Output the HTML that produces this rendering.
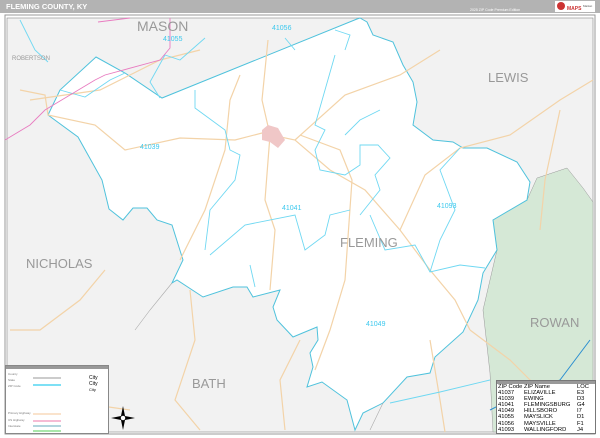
<!DOCTYPE html>
<html><head><style>
body{margin:0;width:600px;height:436px;background:#fff;overflow:hidden;font-family:"Liberation Sans",Arial,sans-serif;position:relative}
.hdr{position:absolute;left:0;top:0;width:600px;height:13px;background:#b3b3b3}
.hdr .t{position:absolute;left:6px;top:2px;color:#fff;font-weight:bold;font-size:7.5px}
.hdr .e{position:absolute;left:470px;top:8px;color:#fff;font-size:3.5px}
.logo{position:absolute;left:555px;top:1px;width:40px;height:11px;background:#fff}
svg{position:absolute;left:0;top:0}
.tbl{position:absolute;left:496px;top:380px;width:98px;height:52px;background:#fff;border:1px solid #777;font-size:5.8px;line-height:6px;color:#000;overflow:hidden}
.tbl .h{background:#999;height:3px}
.tbl div.r{position:relative;height:6.1px}
.tbl span{position:absolute}
.leg{position:absolute;left:5px;top:365px;width:102px;height:67px;background:#fff;border:1px solid #888}
.leg .h{background:#999;height:3px}
</style></head><body>
<div class="hdr"><div class="t">FLEMING COUNTY, KY</div><div class="e">2025 ZIP Code Premium Edition</div>
<div class="logo"><svg width="40" height="11"><circle cx="6" cy="5" r="4" fill="#c33"/><text x="12" y="9" font-size="5" fill="#c33" font-weight="bold">MAPS</text><text x="28" y="6" font-size="3" fill="#555">Market</text></svg></div></div>
<svg width="600" height="436">
<rect x="5" y="15" width="590" height="419" fill="#fff" stroke="#999" stroke-width="1"/>
<rect x="7" y="18" width="586" height="414" fill="#f2f2f2" stroke="#888" stroke-width="0.6"/>
<polygon points="537,178 567,168 583,188 593,202 593,432 493,432 490,373 483,310 497,250 493,220 527,200" fill="#d5e8d6" stroke="#999" stroke-width="0.5"/>
<polygon fill="#fff" stroke="#4fc2dc" stroke-width="1" points="96,57 125,73 162,98 357,19 360,18 367,22 373,35 393,42 403,65 413,82 417,102 413,125 433,140 453,142 463,148 487,148 517,162 530,182 527,200 493,220 497,250 483,273 478,300 463,332 435,357 430,373 407,377 383,403 363,413 355,430 347,400 322,382 307,387 313,367 310,353 318,340 317,327 293,337 277,320 273,307 280,290 253,297 247,287 233,287 203,297 177,280 172,283 183,260 172,225 157,220 147,208 133,208 123,220 109,209 102,180 78,137 48,115 60,90"/>
<g fill="none" stroke="#f3d3a8" stroke-width="1.2">
<path d="M20,90 L45,95 L48,115 L95,125 L125,150 L180,138 L235,140 L262,133 L295,140 L330,170 L365,190 L400,230 L430,270 L455,300 L470,330"/>
<path d="M268,40 L262,100 L270,135 L265,200 L275,230 L270,290"/>
<path d="M300,135 L340,150 L352,180 L345,280 L330,330 L315,370"/>
<path d="M295,140 L345,95 L400,75 L440,50"/>
<path d="M30,100 L100,90 L160,60 L200,50"/>
<path d="M400,230 L425,175 L460,148 L510,135 L560,100 L593,80"/>
<path d="M560,110 L545,180 L540,230"/>
<path d="M105,270 L80,300 L40,330 L10,330"/>
<path d="M190,290 L195,340 L175,400 L200,430"/>
<path d="M10,390 L60,400 L130,410"/>
<path d="M300,340 L280,380 L285,430"/>
<path d="M430,340 L440,400 L445,432"/>
<path d="M470,330 L510,360 L540,390"/>
<path d="M240,75 L230,100 L225,150 L205,210 L180,260"/>
</g>
<g fill="none" stroke="#6fd8f2" stroke-width="0.9">
<path d="M60,90 L85,97 L110,80 L125,73"/>
<path d="M160,98 L150,82 L165,55 L180,60 L205,38"/>
<path d="M195,90 L195,108 L225,130 L230,150 L240,155 L235,180 L210,210 L205,250"/>
<path d="M285,38 L295,50"/>
<path d="M335,30 L350,35 L345,50"/>
<path d="M335,55 L315,125 L325,130 L315,150 L320,170 L345,175 L360,165 L360,145 L378,145 L390,158 L375,175 L380,190 L372,200 L360,215"/>
<path d="M380,110 L360,120 L345,135"/>
<path d="M210,255 L245,225 L295,215 L305,250 L325,235 L330,215 L350,210"/>
<path d="M370,215 L385,250 L415,245 L430,272 L460,265 L485,268"/>
<path d="M430,272 L440,240 L455,210 L440,170 L460,148"/>
<path d="M255,287 L250,265"/>
<path d="M390,403 L440,392 L490,380"/>
<path d="M20,20 L35,50 L48,62"/>
</g>
<path d="M490,410 L520,395 L560,380 L590,340" stroke="#2a8ed0" stroke-width="1" fill="none"/>
<path d="M5,140 L30,125 L45,110 L70,95 L95,80 L105,75 L160,60 L170,48 L170,18" stroke="#e87cc0" stroke-width="0.9" fill="none"/>
<path d="M98,22 L130,18" stroke="#e87cc0" stroke-width="0.9" fill="none"/>
<path d="M172,283 L150,310 L135,330 M383,403 L370,430" stroke="#aaa" stroke-width="0.6" fill="none"/>
<polygon points="262,130 268,125 278,128 285,140 278,148 270,142 262,140" fill="#f0c7c7"/>
<g font-family="Liberation Sans,Arial,sans-serif" fill="#999">
<text x="137" y="31" font-size="14">MASON</text>
<text x="488" y="82" font-size="13">LEWIS</text>
<text x="340" y="247" font-size="13">FLEMING</text>
<text x="26" y="268" font-size="13">NICHOLAS</text>
<text x="530" y="327" font-size="13">ROWAN</text>
<text x="192" y="388" font-size="13">BATH</text>
<text x="12" y="60" font-size="6">ROBERTSON</text>
</g>
<g font-family="Liberation Sans,Arial,sans-serif" fill="#3cc8ee" font-size="7">
<text x="272" y="30">41056</text><text x="163" y="41">41055</text><text x="140" y="149">41039</text>
<text x="282" y="210">41041</text><text x="437" y="208">41093</text><text x="366" y="326">41049</text>
</g>
<g transform="translate(123,418)" fill="#000"><polygon points="0,-12 2,-2 12,0 2,2 0,12 -2,2 -12,0 -2,-2"/><circle r="2.5" fill="#fff" stroke="#000" stroke-width="0.5"/></g>
</svg>
<div class="leg"><div class="h"></div>
<svg width="102" height="64" style="position:relative">
<g font-size="3" fill="#777"><text x="2" y="6">County</text><text x="2" y="12">State</text><text x="2" y="18">ZIP Code</text><text x="2" y="45">Primary Highway</text><text x="2" y="52">US Highway</text><text x="2" y="58">Interstate</text></g>
<g stroke-width="1" fill="none"><path d="M27,9 H55" stroke="#999"/><path d="M27,16 H55" stroke="#7ee0f5" stroke-width="2"/><path d="M27,45 H55" stroke="#f6c79a"/><path d="M27,52 H55" stroke="#e7a"/><path d="M27,57 H55" stroke="#6ab"/><path d="M27,62 H55" stroke="#5c5"/></g>
<text x="83" y="10" font-size="5">City</text><text x="83" y="16" font-size="5">City</text><text x="83" y="22" font-size="4">City</text>
</svg></div>
<div class="tbl"><div class="h"></div>
<div class="r"><span style="left:1px">ZIP Code</span><span style="left:27px">ZIP Name</span><span style="left:80px">LOC</span></div>
<div class="r"><span style="left:1px">41037</span><span style="left:27px">ELIZAVILLE</span><span style="left:80px">E3</span></div>
<div class="r"><span style="left:1px">41039</span><span style="left:27px">EWING</span><span style="left:80px">D3</span></div>
<div class="r"><span style="left:1px">41041</span><span style="left:27px">FLEMINGSBURG</span><span style="left:80px">G4</span></div>
<div class="r"><span style="left:1px">41049</span><span style="left:27px">HILLSBORO</span><span style="left:80px">I7</span></div>
<div class="r"><span style="left:1px">41055</span><span style="left:27px">MAYSLICK</span><span style="left:80px">D1</span></div>
<div class="r"><span style="left:1px">41056</span><span style="left:27px">MAYSVILLE</span><span style="left:80px">F1</span></div>
<div class="r"><span style="left:1px">41093</span><span style="left:27px">WALLINGFORD</span><span style="left:80px">J4</span></div>
</div>
</body></html>
